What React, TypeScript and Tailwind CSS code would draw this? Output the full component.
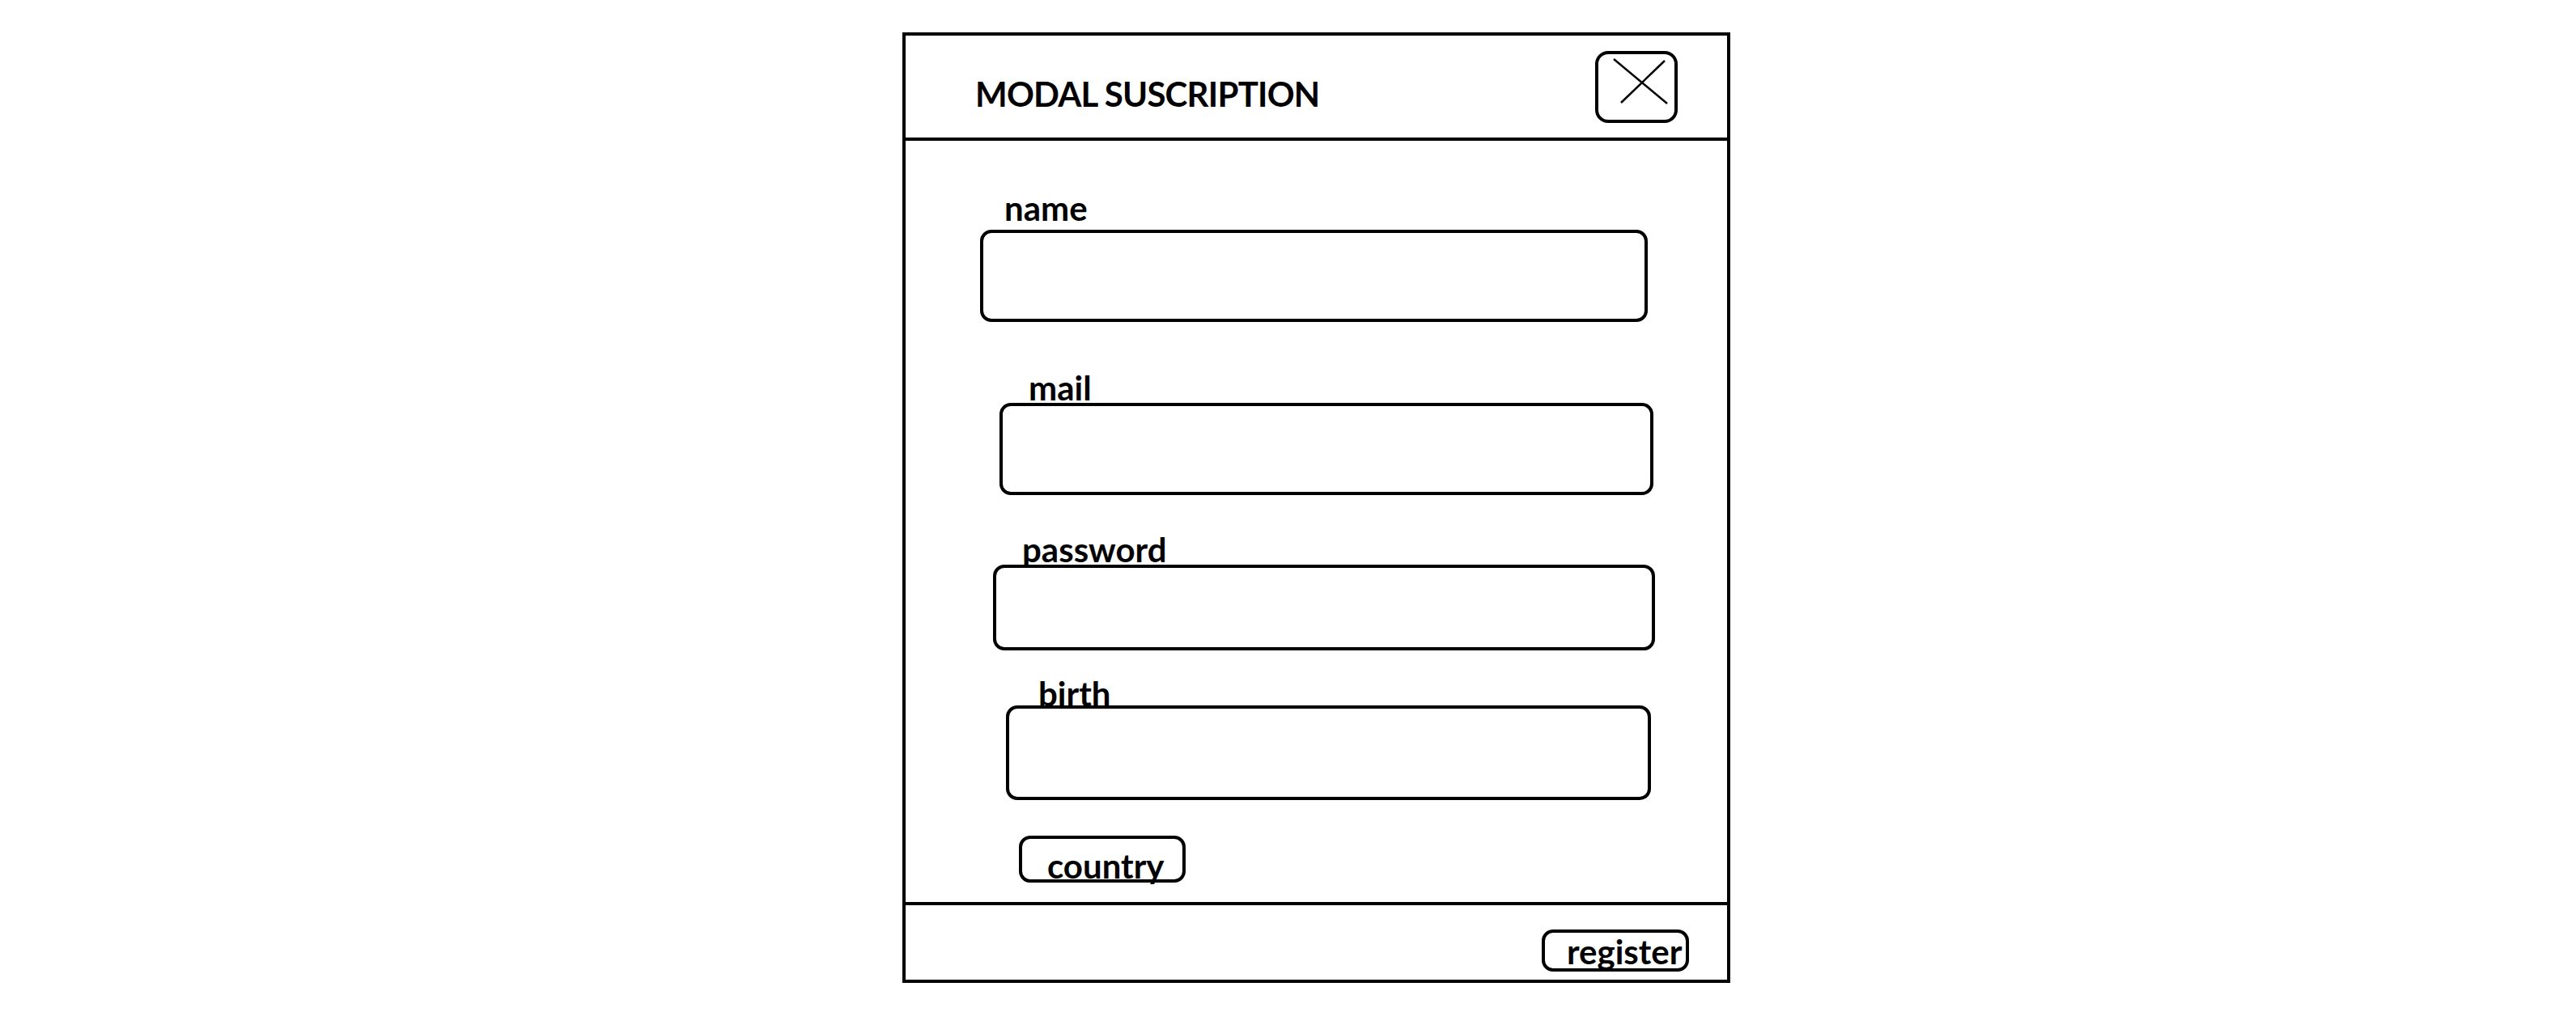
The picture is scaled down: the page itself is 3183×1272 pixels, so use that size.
const FIELDS = [
  { label: "name", ml: "ml-[92px]", w: "w-[825px]", h: "h-[114px]", lm: "ml-[30px]", mt: "mt-[62px]", bm: "mt-[6px]" },
  { label: "mail", ml: "ml-[116px]", w: "w-[808px]", h: "h-[114px]", lm: "ml-[36px]", mt: "mt-[60px]", bm: "-mt-[2px]" },
  { label: "password", ml: "ml-[108px]", w: "w-[818px]", h: "h-[106px]", lm: "ml-[36px]", mt: "mt-[46px]", bm: "-mt-[2px]" },
  { label: "birth", ml: "ml-[124px]", w: "w-[797px]", h: "h-[117px]", lm: "ml-[40px]", mt: "mt-[32px]", bm: "-mt-[6px]" },
] as const;

function CloseButton() {
  return (
    <button className="mt-[19px] w-[102px] h-[89px] shrink-0 border-4 border-black rounded-[16px] bg-white">
      <svg width="94" height="81" viewBox="0 0 94 81" className="block">
        <line x1="19" y1="6" x2="85" y2="61" stroke="black" strokeWidth="2.5" />
        <line x1="82" y1="8" x2="28" y2="60" stroke="black" strokeWidth="2.5" />
      </svg>
    </button>
  );
}

export default function App() {
  return (
    <div className="w-full h-[1272px] bg-white text-black font-bold text-[42px] leading-[42px] overflow-hidden" style={{ fontFamily: "Lato, 'Open Sans', sans-serif" }}>
      <div className="ml-[1115px] mt-[40px] w-[1023px] h-[1175px] border-4 border-black flex flex-col">
        {/* header */}
        <div className="h-[130px] shrink-0 border-b-4 border-black flex items-start justify-between pl-[86px] pr-[61px]">
          <div className="mt-[51px] whitespace-nowrap tracking-[-0.8px]">MODAL SUSCRIPTION</div>
          <CloseButton />
        </div>

        {/* body */}
        <div className="flex-1 flex flex-col items-start">
          {FIELDS.map((f) => (
            <div key={f.label} className={`${f.ml} ${f.mt} ${f.w} flex flex-col`}>
              <div className={`${f.lm} h-[42px] relative z-10 whitespace-nowrap`}>{f.label}</div>
              <div className={`${f.bm} ${f.h} w-full border-4 border-black rounded-[14px]`} />
            </div>
          ))}
          <button className="ml-[140px] mt-[44px] w-[206px] h-[58px] border-4 border-black rounded-[14px] pl-[31px] pt-[12px] text-left whitespace-nowrap">
            <div className="h-[42px]">country</div>
          </button>
        </div>

        {/* footer */}
        <div className="h-[96px] shrink-0 border-t-4 border-black flex justify-end items-start pr-[47px]">
          <button className="mt-[30px] w-[182px] h-[52px] border-4 border-black rounded-[14px] pl-[27px] pt-[1px] text-left whitespace-nowrap overflow-visible">
            <div className="h-[42px]">register</div>
          </button>
        </div>
      </div>
    </div>
  );
}
